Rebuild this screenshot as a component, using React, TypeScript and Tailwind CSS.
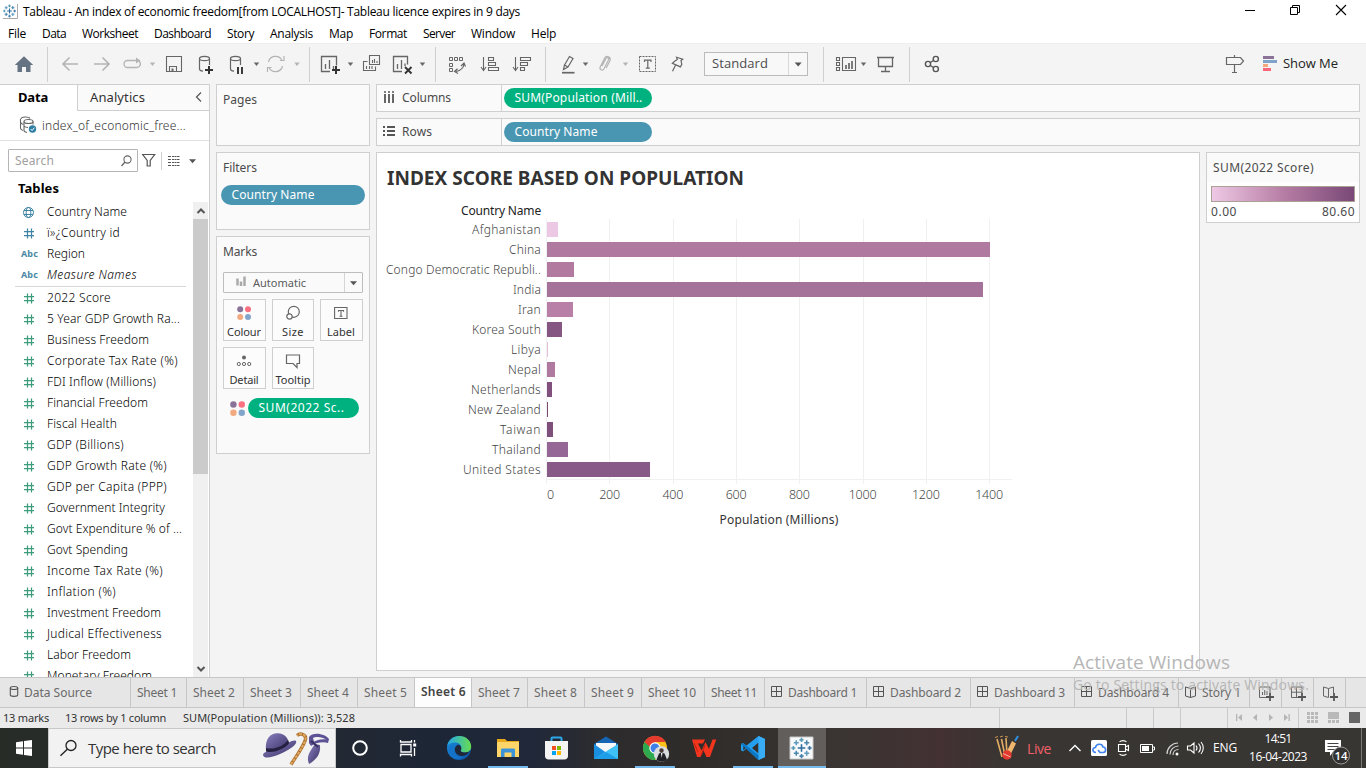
import React, { useLayoutEffect, useRef } from "react";

/** Single line of text tracked so that it fills the given width. */
function T({ w, children, className = "" }: { w: number; children: string; className?: string }) {
  const ref = useRef<HTMLSpanElement>(null);
  useLayoutEffect(() => {
    const el = ref.current;
    if (!el) return;
    el.style.letterSpacing = "0px";
    const natural = el.getBoundingClientRect().width;
    el.style.letterSpacing = `${(w - natural) / children.length}px`;
  }, [w, children]);
  return (
    <span ref={ref} className={`inline-block shrink-0 whitespace-pre ${className}`}>
      {children}
    </span>
  );
}

/** Icon cell whose drawing uses window coordinates. */
function Cell({ x, y, w, h, children, className = "" }: { x: number; y: number; w: number; h: number; children?: React.ReactNode; className?: string }) {
  return (
    <svg width={w} height={h} viewBox={`${x} ${y} ${w} ${h}`} fill="none" className={`block shrink-0 ${className}`}>
      {children}
    </svg>
  );
}

function Tool({ x, w, children }: { x: number; w: number; children?: React.ReactNode }) {
  return (
    <Cell x={x} y={44} w={w} h={40}>
      {children}
    </Cell>
  );
}

const Sep = ({ x }: { x: number }) => <path d={`M${x + 0.5} 47V82`} stroke="#cfcfcf" />;
const Caret = ({ x, y = 64, c = "#666" }: { x: number; y?: number; c?: string }) => (
  <path d={`M${x - 2.7} ${y - 1.5}h5.4l-2.7 3.6z`} fill={c} />
);
const Plus = ({ x, y, s = 4, c = "#333", k = 2 }: { x: number; y: number; s?: number; c?: string; k?: number }) => (
  <path d={`M${x - s} ${y}h${s * 2}M${x} ${y - s}v${s * 2}`} stroke={c} strokeWidth={k} />
);

const menus: [string, number][] = [
  ["File", 18], ["Data", 24], ["Worksheet", 56], ["Dashboard", 57], ["Story", 27], ["Analysis", 43],
  ["Map", 24], ["Format", 38], ["Server", 32], ["Window", 44], ["Help", 25],
];

function TableauMark({ x, y, s = 1 }: { x: number; y: number; s?: number }) {
  const p = (dx: number, dy: number, r: number, c: string) => (
    <path key={`${dx}${dy}`} d={`M${x + (dx - r) * s} ${y + dy * s}h${2 * r * s}M${x + dx * s} ${y + (dy - r) * s}v${2 * r * s}`} stroke={c} strokeWidth={1.1 * Math.max(1, s)} />
  );
  return (
    <g>
      {p(0, 0, 2.6, "#2f6f9f")}
      {p(0, -5.6, 1.4, "#5b9bb8")}
      {p(0, 5.6, 1.4, "#4682ad")}
      {p(-5.6, 0, 1.4, "#5b9bb8")}
      {p(5.6, 0, 1.4, "#3f77a0")}
      {p(-3.6, -3.6, 1.7, "#5f9cc0")}
      {p(3.6, -3.6, 1.7, "#4a86ae")}
      {p(-3.6, 3.6, 1.7, "#4a86ae")}
      {p(3.6, 3.6, 1.7, "#5f9cc0")}
    </g>
  );
}

function TitleBar() {
  return (
    <div className="flex h-6 items-center bg-white text-[12px] text-black">
      <Cell x={0} y={0} w={23} h={24}>
        <path d="M3 18.5h14.500V4" stroke="#aaa" />
        <TableauMark x={9.5} y={11} s={0.92} />
      </Cell>
      <T w={497}>Tableau - An index of economic freedom[from LOCALHOST]- Tableau licence expires in 9 days</T>
      <Cell x={1230} y={0} w={136} h={24} className="ml-auto">
        <path d="M1245 10.500h10" stroke="#000" />
        <path d="M1290.500 7.500h7v7h-7zM1292.500 7.500v-2h7v7h-2" stroke="#000" />
        <path d="M1336 5l10 10M1346 5l-10 10" stroke="#000" strokeWidth="1.1" />
      </Cell>
    </div>
  );
}

function Toolbar() {
  const g = "#666";
  const l = "#b4b4b4";
  return (
    <div className="flex h-[41px] items-center border-t border-[#eeeeee] bg-[#f4f4f4]">
      <Tool x={0} w={50}>
        <path d="M24 56.300L33.200 65H30.500V72H26V67H22V72H17.500V65H14.800z" fill="#667383" />
        <Sep x={47} />
      </Tool>
      <Tool x={50} w={108}>
        <path d="M78 64H63M69.500 57.500L63 64l6.500 6.500M94 64h15M102.500 57.500L109 64l-6.500 6.500" stroke={l} strokeWidth="1.6" />
        <path d="M131 60.500h-3.500a3.500 3.500 0 0 0 0 7h9.500a3.500 3.500 0 0 0 2-6.300M131 60.500h6" stroke={l} strokeWidth="1.3" />
        <path d="M136 57.500l4.500 3-4.500 3z" fill={l} />
        <Caret x={152.500} c={l} />
      </Tool>
      <Tool x={158} w={60}>
        <path d="M166.500 56.500h15v15h-15zM169.500 71v-4.500h7V71" stroke={g} strokeWidth="1.1" />
        <path d="M171.500 68.500h2v3h-2z" fill={g} />
        <ellipse cx="204.500" cy="58.500" rx="5" ry="2.200" stroke={g} strokeWidth="1.200" />
        <path d="M199.500 58.500v10.500c0 1.200 1.500 2 3.500 2.200M209.500 58.500v6.500" stroke={g} strokeWidth="1.200" />
        <Plus x={209} y={70} />
      </Tool>
      <Tool x={218} w={94}>
        <ellipse cx="235.500" cy="58.500" rx="5" ry="2.200" stroke={g} strokeWidth="1.200" />
        <path d="M230.500 58.500v10.500c0 1.200 1.500 2 3.500 2.200M240.500 58.500v6.500" stroke={g} strokeWidth="1.200" />
        <path d="M238 67v7M242 67v7" stroke="#333" strokeWidth="1.900" />
        <Caret x={256.500} />
        <path d="M268.500 62a7.200 7.200 0 0 1 13.500-1.500M282.500 66a7.200 7.200 0 0 1-13.500 1.500M267.500 72v-4.500h4M284 56v4.500h-4" stroke={l} strokeWidth="1.200" />
        <Caret x={297} c={l} />
        <Sep x={309} />
      </Tool>
      <Tool x={312} w={128}>
        <path d="M330 71.500h-8.500v-15h15v9M325.500 64v5M329.500 60v9M333.500 66v3" stroke={g} strokeWidth="1.300" />
        <Plus x={336} y={70} />
        <Caret x={350.500} />
        <path d="M369.500 55.500h10v9h-10zM367.500 61.500h-4v9h12v-4M372.500 60v3M374.500 59v4M377 61v2M366.500 66v3M369.500 66v3M372 66v3" stroke={g} strokeWidth="1.100" />
        <path d="M402 71.500h-8.500v-15h14v8M397.500 64v5M401.500 60v9M405 63.500v2.500" stroke={g} strokeWidth="1.300" />
        <path d="M405 67l6.500 6.500M411.500 67l-6.500 6.500" stroke="#333" strokeWidth="1.900" />
        <Caret x={422.500} />
        <Sep x={435} />
      </Tool>
      <Tool x={440} w={108}>
        <path d="M449.500 57.500h3v3h-3zM454.500 57.500h3v3h-3zM459.500 57.500h3v3h-3zM449.500 63.500h3v3h-3zM449.500 68.500h3v3h-3z" stroke={g} />
        <path d="M464 64c-.5 4-3 6.500-8 7.500M461 66l3-3 1.500 3.500M457.500 68.800l-3 2.700 3.500 2" stroke={g} strokeWidth="1.200" />
        <path d="M483.500 57v13M481 67l2.500 3.500 2.500-3.500M488.500 57.500h5v3h-5zM488.500 62.500h7v3h-7zM488.500 67.500h10v3h-10z" stroke={g} strokeWidth="1.100" />
        <path d="M515.500 57v13M513 67l2.500 3.500 2.500-3.500M520.500 57.500h10v3h-10zM520.500 62.500h7v3h-7zM520.500 67.500h4v3h-4z" stroke={g} strokeWidth="1.100" />
        <Sep x={545} />
      </Tool>
      <Tool x={548} w={156}>
        <path d="M564.500 65l5-8.500 3.500 2-5 8.500zM564.500 65l-1 4.500 4.500-2.500" stroke={g} strokeWidth="1.200" />
        <path d="M562 72.700h12.500" stroke={g} strokeWidth="1.700" />
        <Caret x={585.500} />
        <path d="M602 66l4-7.500c1-1.700 3.500-.5 2.600 1.300l-4.600 9c-1.300 2.400-5 .8-3.800-1.900l4.600-9c1.700-2.900 6.500-.7 5.200 2.600l-3.800 7.500" stroke={l} strokeWidth="1.200" />
        <Caret x={625.500} c={l} />
        <path d="M639.500 56.500h16v15h-16z" stroke={g} strokeDasharray="2 1" />
        <path d="M644.500 62v-1.800h6.500V62M647.800 60.200v8M645.800 68.200h4" stroke={g} strokeWidth="1.200" />
        <path d="M676.500 57.200l6.200 2-1.700 1.200.8 4-1.400 2.500-8-3.600 2.200-2 2.700-1.800zM675.500 65.200l-3 6" stroke={g} strokeWidth="1.200" />
      </Tool>
      <div className="flex h-6 w-[104px] items-center border border-[#bbbbbb] bg-[#f8f8f8] pl-[7px] text-[13px] text-[#4c4c4c]">
        <T w={56}>Standard</T>
        <Cell x={787} y={52} w={20} h={22} className="ml-auto">
          <path d="M788.500 52v22" stroke="#d8d8d8" />
          <path d="M794.700 61.500h7l-3.500 4z" fill="#555" />
        </Cell>
      </div>
      <Tool x={808} w={146}>
        <Sep x={823} />
        <path d="M836.500 57.500h3v3h-3zM836.500 62.500h3v3h-3zM836.500 67.500h3v3h-3zM842.500 57.500h13v13h-13z" stroke={g} strokeWidth="1.100" />
        <path d="M846 65v4M849 63v6M852 61v8" stroke={g} strokeWidth="1.700" />
        <Caret x={863.500} />
        <path d="M877 57.500h17M878.500 58v8.500h14V58M885.500 66.500v5M881 71.500h9" stroke={g} strokeWidth="1.300" />
        <Sep x={909} />
        <g stroke="#555" strokeWidth="1.400">
          <circle cx="928" cy="64" r="2.600" />
          <circle cx="935.800" cy="59" r="2.600" />
          <circle cx="935.800" cy="69" r="2.600" />
          <path d="M930.300 62.500l3.200-2M930.300 65.500l3.200 2" />
        </g>
      </Tool>
      <Cell x={1220} y={44} w={63} h={40} className="ml-auto">
        <path d="M1226.500 57.500h14l3 3.500-3 3.500h-14zM1234.500 55v2.500M1234.500 65v7M1232 72.500h5" stroke={g} strokeWidth="1.200" />
        <path d="M1263 56h11v3h-11z" fill="#8a7396" />
        <path d="M1263 60h14v3h-14z" fill="#7fa3ca" />
        <path d="M1263 64h5v3h-5z" fill="#f3a87e" />
        <path d="M1263 68h8v3h-8z" fill="#f9677c" />
      </Cell>
      <T w={55} className="mr-7 text-[13px] text-[#222]">Show Me</T>
    </div>
  );
}

const dims: [string, number, string][] = [
  ["Country Name", 80, "globe"],
  ["ï»¿Country id", 73, "hash"],
  ["Region", 38, "abc"],
  ["Measure Names", 90, "abc"],
];
const measures: [string, number][] = [
  ["2022 Score", 64], ["5 Year GDP Growth Ra...", 133], ["Business Freedom", 102], ["Corporate Tax Rate (%)", 131],
  ["FDI Inflow (Millions)", 109], ["Financial Freedom", 101], ["Fiscal Health", 70], ["GDP (Billions)", 77],
  ["GDP Growth Rate (%)", 120], ["GDP per Capita (PPP)", 120], ["Government Integrity", 118], ["Govt Expenditure % of ...", 135],
  ["Govt Spending", 81], ["Income Tax Rate (%)", 116], ["Inflation (%)", 69], ["Investment Freedom", 114],
  ["Judical Effectiveness", 115], ["Labor Freedom", 84], ["Monetary Freedom", 105],
];

function FieldIcon({ kind, color }: { kind: string; color: string }) {
  if (kind === "abc")
    return (
      <span className="flex w-[47px] shrink-0 pt-px pl-[21px] text-[9px] font-bold text-[#4a87a5]">
        <T w={17}>Abc</T>
      </span>
    );
  return (
    <Cell x={0} y={-1} w={47} h={21}>
      {kind === "globe" ? (
        <g stroke={color}>
          <circle cx="28.500" cy="10.500" r="5" />
          <ellipse cx="28.500" cy="10.500" rx="2.300" ry="5" />
          <path d="M24 8.500h9M24 12.500h9" />
        </g>
      ) : (
        <path d="M27.500 5.500v10M31.500 5.500v10M24 8.500h10M24 12.500h10" stroke={color} strokeWidth="1.250" />
      )}
    </Cell>
  );
}

function DataPane() {
  return (
    <div className="flex w-[210px] shrink-0 flex-col overflow-hidden border-t border-r border-[#cfcfcf] bg-white">
      <div className="flex h-[26px] shrink-0 text-[13px]">
        <div className="flex w-[77px] items-center pl-[18px] font-bold text-black">
          <T w={30}>Data</T>
        </div>
        <div className="flex flex-1 items-center border-b border-l border-[#cfcfcf] bg-[#fafafa] pl-3 text-[#333]">
          <T w={55}>Analytics</T>
          <Cell x={190} y={85} w={19} h={25} className="ml-auto">
            <path d="M201 92.500l-4.500 4.500 4.500 4.500" stroke="#555" strokeWidth="1.200" />
          </Cell>
        </div>
      </div>
      <div className="flex h-[30px] shrink-0 items-center border-b border-[#e0e0e0] text-[12px] font-light text-[#333]">
        <Cell x={0} y={111} w={42} h={29}>
          <g stroke="#666" strokeWidth="1.100">
            <path d="M21 119c0-2.500 8-2.500 9-.5M20.500 119v9c0 1.500 1 2 2.500 2.500M21 122.500c0 1 1 1.500 2.500 2" />
            <ellipse cx="28.500" cy="121.500" rx="4.500" ry="2" />
            <path d="M24 121.500v9c0 1 1.500 1.700 3 2M33 121.500v3M24 126c1 1.200 2.500 1.500 4 1.500" />
          </g>
          <circle cx="32.500" cy="129" r="3.700" fill="#2f7fa5" />
          <path d="M30.700 129l1.400 1.500 2.300-2.800" stroke="#fff" />
        </Cell>
        <T w={144}>index_of_economic_free...</T>
      </div>
      <div className="flex h-[39px] shrink-0 items-center pl-2 text-[12px]">
        <div className="flex h-[23px] w-[130px] items-center rounded-[1px] border border-[#b5b5b5] pl-1.5 text-[#a0a0a0]">
          <T w={39}>Search</T>
          <Cell x={118} y={150} w={18} h={21} className="ml-auto">
            <circle cx="126.500" cy="159.500" r="3.600" stroke="#666" strokeWidth="1.100" />
            <path d="M124 162l-3.500 4" stroke="#666" strokeWidth="1.300" />
          </Cell>
        </div>
        <Cell x={138} y={141} w={71} h={38}>
          <path d="M142.700 153.500h12l-4.500 6v5.500h-3v-5.500z" stroke="#555" strokeWidth="1.200" />
          <path d="M161.500 151v18" stroke="#cfcfcf" />
          <path d="M168 155.500h3M168 158.500h3M168 161.500h3M168 164.500h3" stroke="#555" />
          <path d="M172 155.500h8M172 158.500h8M172 161.500h8M172 164.500h8" stroke="#555" strokeDasharray="2 .5" />
          <path d="M189 158.200h7l-3.500 4z" fill="#555" />
        </Cell>
      </div>
      <div className="flex h-[22px] shrink-0 items-center pb-[5px] pl-[18px] text-[13px] font-bold text-black">
        <T w={41}>Tables</T>
      </div>
      <div className="flex min-h-0 flex-1">
        <div className="w-[193px] overflow-hidden text-[12px] font-light text-black">
          {dims.map(([t, w, k]) => (
            <div key={t} className="flex h-[21px] items-center pb-0.5">
              <FieldIcon kind={k} color="#3f84a5" />
              <T w={w} className={t === "Measure Names" ? "italic" : ""}>{t}</T>
            </div>
          ))}
          <div className="mr-[7px] mb-px ml-[15px] h-px bg-[#d8d8d8]" />
          {measures.map(([t, w]) => (
            <div key={t} className="flex h-[21px] items-center pb-0.5">
              <FieldIcon kind="hash" color="#3c9c7c" />
              <T w={w}>{t}</T>
            </div>
          ))}
        </div>
        <div className="flex w-[15px] flex-col justify-between bg-[#f0f0f0]">
          <Cell x={193} y={202} w={15} h={17}>
            <path d="M197.500 213l3.500-3.500 3.500 3.500" stroke="#555" strokeWidth="2" />
          </Cell>
          <div className="mb-auto h-[255px] bg-[#cbcbcb]" />
          <Cell x={193} y={660} w={15} h={17}>
            <path d="M197.500 667l3.500 3.500 3.500-3.500" stroke="#555" strokeWidth="2" />
          </Cell>
        </div>
      </div>
    </div>
  );
}

function Dots({ size = 14 }: { size?: number }) {
  return (
    <svg width={size} height={size} viewBox="0 0 14 14" className="shrink-0">
      <circle cx="3.200" cy="3.200" r="3" fill="#8a7399" />
      <circle cx="11" cy="3.200" r="3" fill="#fb7081" />
      <circle cx="3.200" cy="11" r="3" fill="#f3aa80" />
      <circle cx="11" cy="11" r="3" fill="#83a5cb" />
    </svg>
  );
}

function MarkButton({ label, w, wide, children }: { label: string; w: number; wide?: boolean; children: React.ReactNode }) {
  return (
    <div className={`flex h-[42px] flex-col items-center justify-between border border-[#cfcfcf] bg-white/40 pt-1.5 text-[11px] leading-[15px] text-[#333] ${wide ? "w-[43px] pr-px" : "w-[42px]"}`}>
      <div className="flex h-3.5 items-center">{children}</div>
      <T w={w} className="mb-px">{label}</T>
    </div>
  );
}

const pill = "flex h-5 items-center rounded-full pl-[10.5px] text-[12px] font-normal text-white";

function Shelves() {
  const card = "border border-[#cfcfcf] bg-[#fafafa]";
  return (
    <div className="ml-1.5 flex w-[154px] shrink-0 flex-col gap-1.5 text-[12px] text-[#4a4a4a]">
      <div className={`${card} h-[62px] pt-1.5 pl-1.5 leading-[18px]`}>
        <T w={34}>Pages</T>
      </div>
      <div className={`${card} h-[78px] pt-1.5 leading-[18px]`}>
        <T w={34} className="ml-1.5">Filters</T>
        <div className={`${pill} mx-1 mt-2 bg-[#4996b2]`}>
          <T w={83}>Country Name</T>
        </div>
      </div>
      <div className={`${card} h-[218px] px-1.5 pt-1.5 leading-[18px]`}>
        <T w={34}>Marks</T>
        <div className="mt-[11px] flex h-[21px] w-[140px] items-center rounded-[1px] border border-[#bdbdbd] text-[11px] text-[#5a5a5a]">
          <Cell x={224} y={273} w={29} h={19}>
            <path d="M237.500 278.500v7M241 281.500v4.500M244.500 276.500v9.500" stroke="#aaa" strokeWidth="2.500" />
          </Cell>
          <T w={53}>Automatic</T>
          <Cell x={343} y={273} w={19} h={19} className="ml-auto">
            <path d="M344.500 273v19" stroke="#d5d5d5" />
            <path d="M350 281.200h7l-3.500 4z" fill="#555" />
          </Cell>
        </div>
        <div className="mt-1.5 flex justify-between">
          <MarkButton label="Colour" w={34} wide><Dots /></MarkButton>
          <MarkButton label="Size" w={22}>
            <svg width="16" height="16" viewBox="0 0 16 16" fill="none" stroke="#666" strokeWidth="1.200">
              <circle cx="8.800" cy="6.800" r="5.500" />
              <circle cx="4.500" cy="11.500" r="2.700" fill="#fff" />
            </svg>
          </MarkButton>
          <MarkButton label="Label" w={28} wide>
            <svg width="14" height="14" viewBox="0 0 14 14" fill="none" stroke="#666" strokeWidth="1.100">
              <path d="M.6 1.500h12.400v11H.6zM4.500 5.800V4.500h5v1.300M7 4.500v5.700M5.500 10.200h3" />
            </svg>
          </MarkButton>
        </div>
        <div className="mt-1.5 flex gap-1.5">
          <MarkButton label="Detail" w={29} wide>
            <svg width="16" height="16" viewBox="0 0 16 16" fill="none" stroke="#666">
              <circle cx="8" cy="4.500" r="2" fill="#666" stroke="none" />
              <circle cx="2.800" cy="11" r="1.600" />
              <circle cx="8" cy="11" r="1.600" />
              <circle cx="13.200" cy="11" r="1.600" />
            </svg>
          </MarkButton>
          <MarkButton label="Tooltip" w={35}>
            <svg width="16" height="16" viewBox="0 0 16 16" fill="none" stroke="#666" strokeWidth="1.200">
              <path d="M1.500 2h13v8.500h-2.500v4l-4-4H1.500z" />
            </svg>
          </MarkButton>
        </div>
        <div className="mt-[9px] flex items-center gap-[3px] pl-[7px]">
          <Dots size={15} />
          <div className={`${pill} w-[111px] bg-[#00b180]`}>
            <T w={86}>SUM(2022 Sc..</T>
          </div>
        </div>
      </div>
    </div>
  );
}

const rows: [string, number, number, string][] = [
  ["Afghanistan", 69, 11, "#edc8e5"], ["China", 32, 443, "#b079a0"], ["Congo Democratic Republi..", 155, 27, "#b17a9e"],
  ["India", 28, 436, "#a57299"], ["Iran", 23, 26, "#b880a6"], ["Korea South", 69, 15, "#865683"],
  ["Libya", 30, 1, "#e3bfd9"], ["Nepal", 33, 8, "#b0799f"], ["Netherlands", 70, 5, "#81507d"],
  ["New Zealand", 73, 1, "#7a4b6e"], ["Taiwan", 41, 6, "#7f4f7b"], ["Thailand", 49, 21, "#956796"],
  ["United States", 78, 103, "#885a88"],
];
const gridX = [546.5, 609.5, 673.5, 736.5, 799.5, 863.5, 926.5, 989.5];
const ticks: [string, number][] = [["200", 21], ["400", 21], ["600", 21], ["800", 21], ["1000", 28], ["1200", 28], ["1400", 28]];

function Chart() {
  return (
    <div className="w-[824px] border border-[#cfcfcf] bg-white">
      <div className="flex h-[51px] items-center pl-2.5 text-[19px] font-bold text-[#333]">
        <T w={357}>INDEX SCORE BASED ON POPULATION</T>
      </div>
      <div className="flex">
        <div className="flex w-[164px] flex-col items-end text-[12px] font-light text-[#444]">
          <div className="flex h-4 items-center pb-0.5 font-normal text-[#222]">
            <T w={80}>Country Name</T>
          </div>
          {rows.map(([t, w]) => (
            <div key={t} className="flex h-5 items-center">
              <T w={w}>{t}</T>
            </div>
          ))}
        </div>
        <div className="pt-3">
          <Cell x={541} y={216} w={475} h={270}>
            <path d={gridX.map((x) => `M${x} 219V484`).join("")} stroke="#f0f0f0" />
            <path d="M547 479.500H1012" stroke="#f0f0f0" />
            {rows.map(([t, , w, c], i) => (
              <rect key={t} x="547" y={222 + i * 20} width={w} height="15" fill={c} />
            ))}
          </Cell>
          <div className="flex h-[18px] items-center pt-px text-[12.500px] font-light text-[#444]">
            <div className="flex w-[37px] pl-1.5"><T w={8}>0</T></div>
            {ticks.map(([t, w]) => (
              <div key={t} className="flex w-[63.250px] justify-center">
                <T w={w}>{t}</T>
              </div>
            ))}
          </div>
          <div className="flex h-8 w-[476px] items-center justify-center text-[12px] text-[#333]">
            <T w={119}>Population (Millions)</T>
          </div>
        </div>
      </div>
    </div>
  );
}

function Workspace() {
  const shelf = "flex h-7 items-center border border-[#cfcfcf] bg-[#fafafa] text-[12px] text-[#4a4a4a]";
  return (
    <div className="ml-1.5 flex w-[984px] flex-col gap-1.5">
      <div className={shelf}>
        <Cell x={377} y={85} w={25} h={26}>
          <path d="M385 94v9M389 94v9M393 94v9" stroke="#555" strokeWidth="1.800" />
          <path d="M384 92h2M388 92h2M392 92h2" stroke="#555" strokeWidth="1.500" />
        </Cell>
        <T w={49}>Columns</T>
        <div className="ml-[50px] flex h-full flex-1 items-center border-l border-[#cfcfcf] pl-0.5">
          <div className={`${pill} w-[148px] bg-[#00b180]`}><T w={128}>SUM(Population (Mill..</T></div>
        </div>
      </div>
      <div className={shelf}>
        <Cell x={377} y={119} w={25} h={26}>
          <path d="M387 127h8M387 131h8M387 135h8" stroke="#555" strokeWidth="1.800" />
          <path d="M383 127h2M383 131h2M383 135h2" stroke="#555" strokeWidth="1.800" />
        </Cell>
        <T w={30}>Rows</T>
        <div className="ml-[69px] flex h-full flex-1 items-center border-l border-[#cfcfcf] pl-0.5">
          <div className={`${pill} w-[148px] bg-[#4996b2]`}><T w={83}>Country Name</T></div>
        </div>
      </div>
      <div className="flex h-[519px] gap-1.5">
        <Chart />
        <div className="h-[71px] w-[154px] border border-[#cfcfcf] bg-white text-[12px] text-[#4a4a4a]">
          <div className="flex h-[29px] items-center bg-[#fafafa] pl-1.5"><T w={101}>SUM(2022 Score)</T></div>
          <div className="mx-1 mt-1 h-4 border border-[#aaa196] bg-linear-to-r from-[#eec9e5] via-[#b77ea5] to-[#7a4977]" />
          <div className="flex justify-between px-1 pt-px leading-[18px]"><T w={26}>0.00</T><T w={33}>80.60</T></div>
        </div>
      </div>
    </div>
  );
}

const sheets: [string, number, number, string?][] = [
  ["Sheet 1", 56, 40], ["Sheet 2", 57, 42], ["Sheet 3", 57, 42], ["Sheet 4", 57, 42], ["Sheet 5", 57, 43], ["Sheet 6", 57, 45],
  ["Sheet 7", 56, 42], ["Sheet 8", 57, 43], ["Sheet 9", 57, 43], ["Sheet 10", 63, 48], ["Sheet 11", 60, 46],
  ["Dashboard 1", 102, 69, "grid"], ["Dashboard 2", 104, 71, "grid"], ["Dashboard 3", 104, 71, "grid"], ["Dashboard 4", 104, 71, "grid"],
  ["Story 1", 71, 39, "book"],
];

function SheetTabs() {
  return (
    <div className="flex h-[31px] border-y border-[#c6c6c6] bg-[#e6e6e6] text-[12px] text-[#6a6a6a]">
      <div className="flex w-[131px] items-center border-r border-[#c6c6c6]">
        <Cell x={0} y={678} w={24} h={29}>
          <ellipse cx="14" cy="688" rx="3.700" ry="1.500" stroke="#555" strokeWidth="1.100" />
          <path d="M10.300 688v7c0 1.800 7.400 1.800 7.400 0v-7" stroke="#555" strokeWidth="1.100" />
        </Cell>
        <T w={68}>Data Source</T>
      </div>
      {sheets.map(([t, w, tw, icon]) => (
        <div
          key={t}
          style={{ width: w }}
          className={`flex shrink-0 items-center border-r border-[#c6c6c6] ${icon ? "gap-[5px] pl-1.5" : "pl-1.5"} ${t === "Sheet 6" ? "bg-[#fdfdfd] pb-0.5 font-semibold text-[#444]" : ""}`}
        >
          {icon === "grid" && (
            <svg width="12" height="12" viewBox="0 0 12 12" fill="none" stroke="#555" className="-mt-0.5"><path d="M.5.5h10v10H.5zM5.500.5v10M.5 5.500h10" /></svg>
          )}
          {icon === "book" && (
            <svg width="12" height="12" viewBox="0 0 12 12" fill="none" stroke="#555" className="-mt-0.5"><path d="M.5 1l5 1.500v9l-5-1.500zM5.500 2.500l5-1.500v9l-5 1.500" /></svg>
          )}
          <T w={tw}>{t}</T>
        </div>
      ))}
      <Cell x={1250} y={678} w={96} h={29}>
        <path d="M1281.500 678v29M1313.500 678v29M1345.500 678v29" stroke="#c6c6c6" />
        <path d="M1266 697.500h-6.500v-10.500h10.500v6M1262.500 692v3M1264.700 690v5M1267 691v4" stroke="#666" />
        <path d="M1298 697.500h-6.500v-10.500h10.500v6M1296.500 687v10.500M1291.500 692.200h10.500" stroke="#666" />
        <path d="M1328.500 697.500v-9l-5-1.500v9zM1328.500 688.500l5-1.500v6" stroke="#666" />
        <Plus x={1270} y={697} c="#555" k={1.800} />
        <Plus x={1302} y={697} c="#555" k={1.800} />
        <Plus x={1334} y={697} c="#555" k={1.800} />
      </Cell>
    </div>
  );
}

function StatusBar() {
  return (
    <div className="flex h-5 items-center bg-[#eaeaea] pl-[3px] text-[11px] text-[#333]">
      <T w={46}>13 marks</T>
      <T w={101} className="ml-[16px]">13 rows by 1 column</T>
      <T w={172} className="ml-[17px]">SUM(Population (Millions)): 3,528</T>
      <Cell x={990} y={708} w={376} h={20} className="ml-auto">
        <path d="M999.500 708v20M1126.500 708v20M1153.500 708v20M1180.500 708v20M1227.500 708v20M1298.500 708v20" stroke="#cacaca" />
        <path d="M1242 714v7l-4-3.500zM1236 714h1.300v7h-1.300zM1257 714v7l-4-3.500zM1269 714v7l4-3.500zM1284 714v7l4-3.500zM1288.500 714h1.300v7h-1.300z" fill="#b5b5b5" />
        <path d="M1307 712h3v3h-3zM1311 712h3v3h-3zM1315 712h3v3h-3zM1307 716h3v3h-3zM1311 716h3v3h-3zM1315 716h3v3h-3zM1307 720h3v3h-3zM1311 720h3v3h-3zM1315 720h3v3h-3zM1328 712h11v7h-11zM1328 720h3v3h-3zM1332 720h3v3h-3zM1336 720h3v3h-3z" fill="#b9b9b9" />
        <path d="M1349 712h11v11h-11z" fill="#666" />
      </Cell>
    </div>
  );
}

function Bar({ x, w, children }: { x: number; w: number; children?: React.ReactNode }) {
  return (
    <Cell x={x} y={728} w={w} h={40}>
      {children}
    </Cell>
  );
}

function Taskbar() {
  return (
    <div className="flex h-10 bg-[linear-gradient(90deg,#272c27_0px,#232933_336px,#1d2636_440px,#20283a_530px,#2d2c2e_600px,#2f2c29_700px,#3a3532_840px,#433133_940px,#383532_1010px,#383633_1366px)] text-white">
      <Bar x={0} w={48}>
        <path d="M16 742.300l7-1v6.300h-7zM24 741.100l8-1.100v7.600h-8zM16 748.500h7v6.300l-7-1zM24 748.500h8v7.500l-8-1.100z" fill="#fff" />
      </Bar>
      <div className="flex w-[288px] items-center border border-[#c8c8c8] bg-[#f2f2f2] text-[15px] text-[#333]">
        <Cell x={49} y={729} w={39} h={38}>
          <circle cx="71" cy="745.500" r="5" stroke="#222" strokeWidth="1.300" />
          <path d="M67.300 749.200l-6.800 6.500" stroke="#222" strokeWidth="1.400" />
        </Cell>
        <T w={128}>Type here to search</T>
        <Cell x={262} y={729} w={73} h={38} className="ml-auto">
          <defs>
            <linearGradient id="hat" x1="0" y1="0" x2="1" y2="1">
              <stop stopColor="#8a7fc0" />
              <stop offset="1" stopColor="#3a3265" />
            </linearGradient>
          </defs>
          <path d="M263 755c0-3 6-4 14-7s16-9 19-7c2 3-7 9-16 13s-16 5-17 1z" fill="url(#hat)" />
          <path d="M266 750c-1-8 2-15 9-16.500 7-1.500 12 2 14 9-6 7-17 10-23 7.500z" fill="url(#hat)" />
          <path d="M266 748c7 2 17-1 22-8l1 3.500c-5 6-16 10-23 8z" fill="#25203f" />
          <path d="M291 764.500c5-8 12-17 14.500-25 1-5-5-7-8.500-4" stroke="#a96f2e" strokeWidth="3.400" />
          <path d="M291 764.500c5-8 12-17 14.500-25 1-5-5-7-8.500-4" stroke="#e0a860" strokeWidth="2" strokeDasharray="3 1" />
          <path d="M309 737c4-6 17-3 20 2l-1 4c-5-2-13 0-17 3l-2-3z" fill="#5d5294" />
          <path d="M313 738c3-2 10-1 13 1.500-5-1-9 1-12 2z" fill="#f2f2f2" />
          <path d="M315 744l5 1c1 9-4 15-11 19-2-6-2-9 6-20z" fill="url(#hat)" />
          <path d="M311 741l7 6" stroke="#39305f" strokeWidth="2" />
        </Cell>
      </div>
      <Bar x={336} w={96}>
        <circle cx="360" cy="748" r="6.800" stroke="#fff" strokeWidth="2" />
        <path d="M401 744.500h10v7.500h-10zM400.500 740v2h11v-2M400.500 756.500v-2h11v2M414.500 740v2.500M414.500 748v8" stroke="#fff" strokeWidth="1.300" />
        <path d="M413.200 743.500h3v3h-3z" fill="#fff" />
      </Bar>
      <Bar x={432} w={52}>
        <defs>
          <linearGradient id="edge" x1="0" y1="0" x2="1" y2="0"><stop stopColor="#25a7e8" /><stop offset="1" stopColor="#66dc50" /></linearGradient>
          <linearGradient id="edge2" x1="0" y1="0" x2="1" y2="1"><stop stopColor="#1b8fdf" /><stop offset="1" stopColor="#0b4fa5" /></linearGradient>
        </defs>
        <circle cx="459" cy="748" r="12" fill="url(#edge2)" />
        <path d="M447.200 746c1-6 6-10 12-10 7 0 12 5 12 10.500 0 4-3 6-6.500 6-3 0-5-1-4-2.500 2-3-.5-7.500-5.500-7.500-4 0-7 1.500-8 3.500z" fill="url(#edge)" />
        <path d="M461 750c-1 1.500 1 2.500 4 2.500 2.500 0 4.500-1 5-2-.5 1.500-3 5-8 5.500-5 0-8-4-7-8 .5-2 2-3 3.500-3.200 2 .7 3.500 3 2.500 5.200z" fill="#1f2637" />
        <path d="M454 744.500c-3 5 0 13 9 12.500-6 4-14 1-14-6 0-3 2-6 5-6.500z" fill="#1473c9" />
      </Bar>
      <Bar x={484} w={48}>
        <path d="M497 739h8l2 2h12v16h-22z" fill="#e9a91c" />
        <path d="M497 742h22v15h-22z" fill="#fdd568" />
        <path d="M501 757v-7c0-1 .5-1.500 1.500-1.500h11c1 0 1.500.5 1.500 1.500v7h-3.500v-4.500h-7V757z" fill="#3d93d8" />
        <path d="M488 766h40v2h-40z" fill="#76b9ed" />
      </Bar>
      <Bar x={532} w={48}>
        <path d="M551.500 741v-2.500c0-.6.4-1 1-1h8c.6 0 1 .4 1 1v2.500" stroke="#2ca8ea" strokeWidth="2" />
        <path d="M545 741h23v15c0 2-1.500 3.500-3.500 3.500h-16c-2 0-3.500-1.500-3.500-3.500z" fill="#f4f4f4" />
        <path d="M552 746h4v4h-4z" fill="#f25022" /><path d="M557 746h4v4h-4z" fill="#7fba00" />
        <path d="M552 751h4v4h-4z" fill="#00a4ef" /><path d="M557 751h4v4h-4z" fill="#ffb900" />
      </Bar>
      <Bar x={580} w={50}>
        <path d="M594 744l12-7.500 12 7.500v15h-24z" fill="#1665b5" />
        <path d="M596 743h20v9h-20z" fill="#f5f7fa" />
        <path d="M594 744l12 8.500-12 6.500z" fill="#1a8fe0" />
        <path d="M618 744v15h-24z" fill="#3fc1f5" />
        <path d="M594 759l12-7 12 7z" fill="#1e9ee9" />
      </Bar>
      <Bar x={630} w={50}>
        <circle cx="655" cy="748" r="12" fill="#fbc116" />
        <path d="M644.600 742A12 12 0 0 0 655 760l5-9-5-3z" fill="#2da94f" />
        <path d="M644.600 742a12 12 0 0 1 21 0H655l-4 6z" fill="#e33b2e" />
        <circle cx="655" cy="748" r="5.700" fill="#fff" /><circle cx="655" cy="748" r="4.500" fill="#3f7fe8" />
        <circle cx="661.500" cy="754" r="7.700" fill="#d9dde0" />
        <circle cx="661.500" cy="750.500" r="2.200" fill="#4a3b37" />
        <path d="M656.500 759.500l2.500-6 2.500-1 3 1 2.500 6c-2.500 3-8 3-10.500 0z" fill="#202228" />
        <path d="M661 753l.7 5 .8-5z" fill="#fff" />
        <path d="M635 766h40v2h-40z" fill="#76b9ed" />
      </Bar>
      <Bar x={680} w={50}>
        <path d="M692 739.500h13l-2 4h-5l3.500 7 4-8.500 3.500 7 3.500-9.500h3.800L710 757h-3.500l-3-6.500-3 6.500H697z" fill="#f2351c" />
        <path d="M694 743l4 9M701 756l4-11" stroke="#b51a10" strokeWidth=".8" />
      </Bar>
      <Bar x={730} w={48}>
        <path d="M758.500 736l6.500 3v18l-6.500 3-12-11.500-3.500 3-2-1.200V744l2-1 3.500 2.500zM758.500 742.500l-6.500 5.500 6.500 5.500zM743.300 745.500v5l2.500-2.500z" fill="#259ff0" fillRule="evenodd" />
        <path d="M758.500 736l6.500 3v18l-6.500 3z" fill="#38adf6" />
        <path d="M741 744.300l2-1.300 15.500 12v5z" fill="#0c78c4" />
        <path d="M733 766h40v2h-40z" fill="#76b9ed" />
      </Bar>
      <Bar x={778} w={48}>
        <path d="M778 728h48v40h-48z" fill="#615e5c" />
        <path d="M790 737h23v22h-23z" fill="#f8f9fa" stroke="#c9c9c9" />
        <TableauMark x={801.5} y={748} s={1.45} />
        <path d="M778 766h48v2h-48z" fill="#76b9ed" />
      </Bar>
      <div className="ml-auto flex items-center text-[12px]">
        <Bar x={990} w={37}>
          <path d="M997 739l5 18M1001.500 739l3.500 17M1006 738l1 17" stroke="#e3ae63" strokeWidth="1.600" />
          <path d="M995 737.500l3-1M1000 737l3-1M1005 736.500l3 .5" stroke="#c99450" />
          <path d="M1015 741l3-5" stroke="#2f8fe0" strokeWidth="2" />
          <path d="M1012 741l4 2.500-7 14-4-2.500z" fill="#efb66d" />
          <circle cx="1007" cy="755" r="4.700" fill="#e33a2f" />
          <path d="M1003 753.500l7.500 3.500" stroke="#f7b4a8" />
        </Bar>
        <T w={24} className="text-[14px] text-[#f2606a]">Live</T>
        <Bar x={1051} w={162}>
          <path d="M1069.500 751l5.500-5.500 5.500 5.500" stroke="#fff" strokeWidth="1.400" />
          <rect x="1091" y="740" width="16" height="16" rx="1.500" fill="#fff" />
          <path d="M1096 752.500c-4 0-4-5-.5-5 .5-4 6.500-4.500 7.500-.5 3.500 0 3.500 5.500 0 5.500h-3l-2-2.500" stroke="#3f82f0" strokeWidth="1.600" />
          <path d="M1118.500 744.500h7v7h-7zM1125.500 747l3-1.500v5l-3-1.500M1119.500 742c1.500-1.800 5.500-1.800 7 0M1119.500 754c1.500 1.800 5.500 1.800 7 0" stroke="#fff" strokeWidth="1.100" />
          <path d="M1140.500 744.500h12v8h-12zM1153 747h1.500v3h-1.500" stroke="#fff" />
          <path d="M1142 746h7v5h-7z" fill="#fff" />
          <path d="M1167 754c0-6 5-11 11-11M1170 754.500c0-5 4-8.500 8.500-8.500M1173 755c0-3.500 2.500-5.500 5.500-5.500" stroke="#d2d2d2" strokeWidth="1.200" />
          <circle cx="1177" cy="754" r="1.500" fill="#fff" />
          <path d="M1187.500 746v4h3l3.500 3v-10l-3.500 3zM1196 745.500c1.200 1.500 1.200 3.500 0 5M1198.500 743.500c2.300 2.700 2.300 6.300 0 9M1201 742c3 3.500 3 8.500 0 12" stroke="#fff" strokeWidth="1.100" />
        </Bar>
        <T w={24}>ENG</T>
        <div className="mr-px ml-3 flex w-[58px] flex-col items-center leading-[18px]">
          <T w={27}>14:51</T>
          <T w={58}>16-04-2023</T>
        </div>
        <Bar x={1308} w={58}>
          <path d="M1325 740h16v12h-8l-3 4v-4h-5z" fill="#fff" />
          <path d="M1327.500 743.500h11M1327.500 746.500h11M1327.500 749.500h7" stroke="#444" />
          <circle cx="1341" cy="755.500" r="8.500" fill="#343230" stroke="#999" />
          <text x="1341" y="759.500" textAnchor="middle" fill="#fff" className="text-[11.5px] font-semibold">14</text>
          <path d="M1361.500 728v40" stroke="#777" />
        </Bar>
      </div>
    </div>
  );
}

export default function App() {
  return (
    <div className="relative flex h-[768px] w-[1366px] flex-col overflow-hidden bg-[#f4f4f4] font-['Open_Sans','Noto_Sans',sans-serif]">
      <TitleBar />
      <div className="flex h-[19px] items-center gap-4 bg-white pl-2 text-[12px] text-black">
        {menus.map(([t, w]) => (
          <T key={t} w={w}>{t}</T>
        ))}
      </div>
      <Toolbar />
      <div className="flex h-[593px] font-['Noto_Sans',sans-serif]">
        <DataPane />
        <Shelves />
        <Workspace />
      </div>
      <div className="font-['Noto_Sans',sans-serif]">
        <SheetTabs />
        <StatusBar />
      </div>
      <Taskbar />
      <div className="pointer-events-none absolute top-[648px] left-[1073px] flex flex-col items-start text-[#b6b6b6]">
        <T w={157} className="text-[19px] leading-7">Activate Windows</T>
        <T w={236} className="text-[14px] leading-[18px]">Go to Settings to activate Windows.</T>
      </div>
    </div>
  );
}
